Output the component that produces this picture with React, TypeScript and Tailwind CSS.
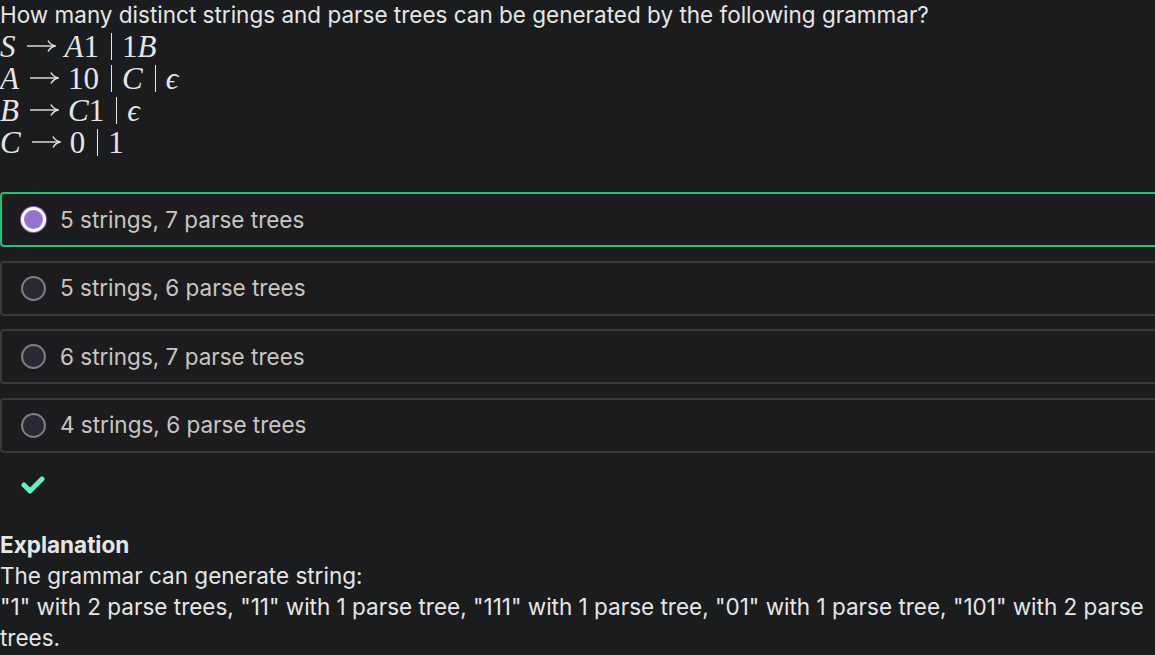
const options = [
  { label: "5 strings, 7 parse trees", selected: true },
  { label: "5 strings, 6 parse trees", selected: false },
  { label: "6 strings, 7 parse trees", selected: false },
  { label: "4 strings, 6 parse trees", selected: false },
];

function Arrow() {
  return (
    <svg width="30" height="14" viewBox="0 0 30 14" className="ml-[10px] mr-[9px] shrink-0" fill="none" stroke="currentColor" strokeWidth="1.4">
      <path d="M1 7 H28" />
      <path d="M22 1.5 Q24 5.5 29 7 Q24 8.5 22 12.5" />
    </svg>
  );
}

function Rule({ lhs, rhs }: { lhs: string; rhs: (string | { v: string })[][] }) {
  return (
    <div className="flex h-[32px] items-center whitespace-nowrap font-['Liberation_Serif',serif] text-[31px] leading-none">
      <span className="italic">{lhs}</span>
      <Arrow />
      {rhs.map((alt, i) => (
        <span key={i} className="flex items-center">
          {i > 0 && <span className="ml-[12px] mr-[10px] h-[27px] w-px shrink-0 bg-[#e6e6e6]" />}
          {alt.map((p, j) =>
            typeof p === "string" ? (
              <span key={j}>{p}</span>
            ) : (
              <span key={j} className="italic">
                {p.v}
              </span>
            )
          )}
        </span>
      ))}
    </div>
  );
}

export default function App() {
  return (
    <div className="min-h-[655px] w-full overflow-hidden bg-[#1b1c1e]">
      <div className="w-[1162px] font-['Inter',sans-serif] text-[#e6e6e6]">
        {/* Question */}
        <p className="text-[22.5px] leading-[30px]">
          How many distinct strings and parse trees can be generated by the following grammar?
        </p>
        <div className="flex flex-col">
          <Rule lhs="S" rhs={[[{ v: "A" }, "1"], ["1", { v: "B" }]]} />
          <Rule lhs="A" rhs={[["10"], [{ v: "C" }], [{ v: "ϵ" }]]} />
          <Rule lhs="B" rhs={[[{ v: "C" }, "1"], [{ v: "ϵ" }]]} />
          <Rule lhs="C" rhs={[["0"], ["1"]]} />
        </div>

        {/* Options */}
        <div className="mt-[34px] flex flex-col gap-[13.5px]">
          {options.map((o) => (
            <div
              key={o.label}
              className={
                o.selected
                  ? "flex h-[55px] items-center gap-[14px] rounded-[4px] border-2 border-[#22c17a] bg-[#1c1c1f] pl-[19px]"
                  : "flex h-[55px] items-center gap-[14px] rounded-[4px] border-2 border-[#38393b] bg-[#1c1c1f] pl-[19px]"
              }
            >
              {o.selected ? (
                <span className="h-[25px] w-[25px] rounded-full border-[3px] border-white bg-[#9473d3] ring-1 ring-[#7f5fc0]" />
              ) : (
                <span className="h-[25px] w-[25px] rounded-full border-2 border-[#7e7d84] bg-[#2a2832]" />
              )}
              <span className="text-[22.5px] text-[#c9c6c0]">{o.label}</span>
            </div>
          ))}
        </div>

        {/* Result */}
        <div className="mt-[22px] pl-[21px]">
          <svg width="24" height="20" viewBox="0 0 24 20" fill="none" stroke="#62f0bd" strokeWidth="5" strokeLinecap="round" strokeLinejoin="round">
            <path d="M3 10 L9 16 L21 4" />
          </svg>
        </div>

        {/* Explanation */}
        <div className="mt-[34px] text-[22.5px] leading-[31px]">
          <p className="font-bold">Explanation</p>
          <p>The grammar can generate string:</p>
          <p>
            "1" with 2 parse trees, "11" with 1 parse tree, "111" with 1 parse tree, "01" with 1 parse tree, "101" with 2 parse trees.
          </p>
        </div>
      </div>
    </div>
  );
}
